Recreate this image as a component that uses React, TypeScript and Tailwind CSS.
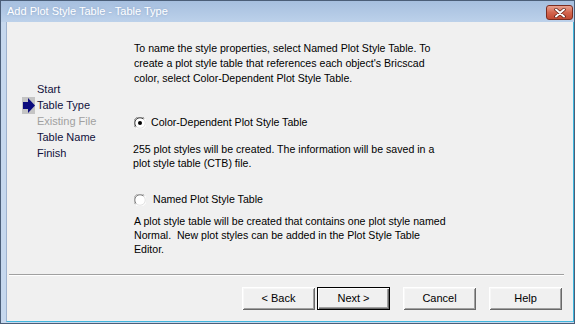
import React from "react";

const font = { fontFamily: '"Liberation Sans", Arial, sans-serif' };

function Radio({ checked }: { checked?: boolean }) {
  return (
    <svg width="12" height="12" viewBox="0 0 12 12" className="shrink-0">
      <circle cx="6" cy="6" r="5.5" fill="#ffffff" />
      <path d="M1.5 10.5 A5.5 5.5 0 0 1 10.5 1.5" fill="none" stroke={checked ? "#808080" : "#a8a8a8"} strokeWidth="1" />
      <path d="M2.3 9.7 A4.5 4.5 0 0 1 9.7 2.3" fill="none" stroke={checked ? "#404040" : "#7c7c7c"} strokeWidth="1" />
      <path d="M10.5 1.5 A5.5 5.5 0 0 1 1.5 10.5" fill="none" stroke="#ffffff" strokeWidth="1" />
      <path d="M9.7 2.3 A4.5 4.5 0 0 1 2.3 9.7" fill="none" stroke="#e3e3e3" strokeWidth="1" />
      {checked && <circle cx="6" cy="6" r="2" fill="#000000" />}
    </svg>
  );
}

function Btn({ label, isDefault }: { label: string; isDefault?: boolean }) {
  return (
    <button
      className={
        "w-[73px] h-[23px] bg-[#f0f0f0] text-[11px] text-black flex items-center justify-center " +
        (isDefault
          ? "border border-black shadow-[inset_1px_1px_#ffffff,inset_-1px_-1px_#696969,inset_-2px_-2px_#a0a0a0]"
          : "shadow-[inset_1px_1px_#ffffff,inset_-1px_-1px_#696969,inset_2px_2px_#f7f7f7,inset_-2px_-2px_#a0a0a0]")
      }
    >
      {label}
    </button>
  );
}

const steps = [
  { name: "Start" },
  { name: "Table Type", current: true },
  { name: "Existing File", disabled: true },
  { name: "Table Name" },
  { name: "Finish" },
];

export default function App() {
  return (
    <div
      className="w-[575px] h-[324px] flex flex-col bg-[#c6d8ee] border border-[#4b5e78] overflow-hidden"
      style={font}
    >
      {/* title bar */}
      <div className="h-[21px] shrink-0 flex items-center justify-between pl-[6px] pr-[1px] bg-gradient-to-b from-[#a6bfdf] to-[#bcd1ea]">
        <span className="text-[11px] text-white [text-shadow:0_0_3px_#8aa4c8]">
          Add Plot Style Table - Table Type
        </span>
        <div className="w-[27px] h-[15px] mt-[2px] rounded-[3px] border border-[#7b2c20] bg-gradient-to-b from-[#e8a190] via-[#d4664f] to-[#c24a33] flex items-center justify-center">
          <svg width="12" height="10" viewBox="0 0 12 10">
            <path d="M2 1.5 L10 8.5 M10 1.5 L2 8.5" stroke="#5a1a10" strokeWidth="3.4" strokeLinecap="round" />
            <path d="M2 1.5 L10 8.5 M10 1.5 L2 8.5" stroke="#ffffff" strokeWidth="2" strokeLinecap="round" />
          </svg>
        </div>
      </div>

      {/* client area */}
      <div className="flex-1 ml-[5px] mb-[1px] flex flex-col bg-[#f0f0f0] border-l border-l-[#9fb3cf] border-r border-r-[#3fb6dd] border-b border-b-[#3fb6dd]">
        <div className="h-[252px] flex">
          {/* step list */}
          <div className="w-[127px] pl-[15px] pt-[59px] flex flex-col">
            {steps.map((s) => (
              <div key={s.name} className="h-[16px] flex items-center">
                <div className="w-[15px] h-[16px] shrink-0 flex items-center">
                  {s.current && (
                    <svg width="13" height="17" viewBox="0 0 13 17">
                      <rect x="0" y="0" width="13" height="17" fill="#c4c4c4" />
                      <rect x="1" y="5" width="6" height="7" fill="#0b0b7e" />
                      <path d="M6 1 L13 8.5 L6 16 Z" fill="#0b0b7e" />
                    </svg>
                  )}
                </div>
                <span
                  className={
                    "text-[11px] leading-[16px] " +
                    (s.disabled ? "text-[#a0a0a0]" : "text-[#10103c]")
                  }
                >
                  {s.name}
                </span>
              </div>
            ))}
          </div>

          {/* options */}
          <div className="flex-1 pt-[19px] text-[10.6px] text-black">
            <p className="leading-[15px]">
              To name the style properties, select Named Plot Style Table. To
              <br />
              create a plot style table that references each object&apos;s Bricscad
              <br />
              color, select Color-Dependent Plot Style Table.
            </p>

            <div className="mt-[30px] h-[14px] flex items-center">
              <Radio checked />
              <span className="ml-[5px]">Color-Dependent Plot Style Table</span>
            </div>

            <p className="mt-[12px] -ml-[1px] leading-[14px]">
              255 plot styles will be created. The information will be saved in a
              <br />
              plot style table (CTB) file.
            </p>

            <div className="mt-[23px] h-[14px] flex items-center">
              <Radio />
              <span className="ml-[7px]">Named Plot Style Table</span>
            </div>

            <p className="mt-[7px] leading-[14px]">
              A plot style table will be created that contains one plot style named
              <br />
              Normal.&nbsp; New plot styles can be added in the Plot Style Table
              <br />
              Editor.
            </p>
          </div>
        </div>

        {/* etched separator */}
        <div className="ml-[2px] mr-[9px] h-[2px] border-t border-t-[#a0a0a0] border-b border-b-white" />

        {/* buttons */}
        <div className="mt-[11px] pr-[11px] flex justify-end">
          <Btn label="< Back" />
          <div className="ml-[2px]">
            <Btn label="Next >" isDefault />
          </div>
          <div className="ml-[13px]">
            <Btn label="Cancel" />
          </div>
          <div className="ml-[13px]">
            <Btn label="Help" />
          </div>
        </div>
      </div>
    </div>
  );
}
